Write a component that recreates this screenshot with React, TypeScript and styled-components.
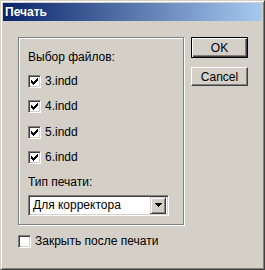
import React from "react";
import styled, { createGlobalStyle } from "styled-components";

const GlobalStyle = createGlobalStyle`
  html, body {
    margin: 0;
    padding: 0;
    background: #d4d0c8;
  }
`;

const Window = styled.div`
  width: 265px;
  height: 270px;
  box-sizing: border-box;
  border: 1px solid;
  border-color: #d4d0c8 #404040 #404040 #d4d0c8;
  box-shadow: inset 1px 1px #ffffff, inset -1px -1px #808080;
  padding: 2px;
  background: #d4d0c8;
  display: flex;
  flex-direction: column;
  font-family: "Liberation Sans", Arial, sans-serif;
  font-size: 12px;
  color: #000;
`;

const TitleBar = styled.div`
  height: 18px;
  line-height: 18px;
  padding-left: 2px;
  background: linear-gradient(90deg, #0a246a, #a6caf0);
  color: #fff;
  font-weight: bold;
`;

const Body = styled.div`
  display: flex;
  padding: 16px 0 0 15px;
`;

const LeftColumn = styled.div`
  display: flex;
  flex-direction: column;
`;

const GroupBox = styled.div`
  width: 166px;
  height: 188px;
  box-sizing: border-box;
  border: 1px solid #808080;
  box-shadow: inset 1px 1px #ffffff, 1px 1px #ffffff;
  padding: 12px 0 0 9px;
  display: flex;
  flex-direction: column;
`;

const Caption = styled.div<{ $gap?: number }>`
  line-height: 14px;
  height: 14px;
  margin-top: ${(p) => p.$gap ?? 0}px;
  white-space: nowrap;
`;

const CheckList = styled.div`
  display: flex;
  flex-direction: column;
  gap: 11.34px;
  margin-top: 10px;
`;

const CheckRow = styled.label<{ $gap?: number }>`
  display: flex;
  align-items: flex-start;
  height: 14px;
  line-height: 14px;
  margin-top: ${(p) => p.$gap ?? 0}px;
  white-space: nowrap;
`;

const Box = styled.span`
  width: 13px;
  height: 13px;
  margin-top: 1px;
  box-sizing: border-box;
  border: 1px solid;
  border-color: #808080 #ffffff #ffffff #808080;
  box-shadow: inset 1px 1px #404040, inset -1px -1px #d4d0c8;
  background: #fff;
  display: flex;
  align-items: center;
  justify-content: center;
  flex: none;
`;

const CheckText = styled.span`
  margin-left: 4px;
`;

const Select = styled.div`
  margin-top: 6px;
  width: 141px;
  height: 21px;
  box-sizing: border-box;
  border: 1px solid;
  border-color: #808080 #ffffff #ffffff #808080;
  box-shadow: inset 1px 1px #404040, inset -1px -1px #d4d0c8;
  background: #fff;
  padding: 2px;
  display: flex;
  align-items: center;
`;

const SelectText = styled.span`
  flex: 1;
  padding-left: 2px;
  line-height: 17px;
  white-space: nowrap;
`;

const DropButton = styled.span`
  width: 16px;
  height: 17px;
  box-sizing: border-box;
  border: 1px solid;
  border-color: #d4d0c8 #404040 #404040 #d4d0c8;
  box-shadow: inset 1px 1px #ffffff, inset -1px -1px #808080;
  background: #d4d0c8;
  display: flex;
  align-items: center;
  justify-content: center;
`;

const ButtonColumn = styled.div`
  display: flex;
  flex-direction: column;
  margin-left: 7px;
  gap: 9px;
`;

const Button = styled.div<{ $default?: boolean }>`
  width: 57px;
  height: ${(p) => (p.$default ? 21 : 19)}px;
  box-sizing: border-box;
  background: #d4d0c8;
  display: flex;
  align-items: center;
  justify-content: center;
  border: 1px solid;
  border-color: ${(p) => (p.$default ? "#000" : "#fff #404040 #404040 #fff")};
  box-shadow: ${(p) =>
    p.$default
      ? "inset 1px 1px #ffffff, inset -1px -1px #404040, inset -2px -2px #808080"
      : "inset -1px -1px #808080"};
`;

const Check = () => (
  <svg width="7" height="7" viewBox="0 0 7 7" shapeRendering="crispEdges">
    <path
      d="M0 2h1v3h-1z M1 3h1v3h-1z M2 4h1v3h-1z M3 3h1v3h-1z M4 2h1v3h-1z M5 1h1v3h-1z M6 0h1v3h-1z"
      fill="#000"
    />
  </svg>
);

const Arrow = () => (
  <svg width="7" height="4" viewBox="0 0 7 4" shapeRendering="crispEdges">
    <path d="M0 0h7v1h-1v1h-1v1h-1v1h-1v-1h-1v-1h-1v-1h-1z" fill="#000" />
  </svg>
);

const files = ["3.indd", "4.indd", "5.indd", "6.indd"];

export default function App() {
  return (
    <>
      <GlobalStyle />
      <Window>
        <TitleBar>Печать</TitleBar>
        <Body>
          <LeftColumn>
            <GroupBox>
              <Caption>Выбор файлов:</Caption>
              <CheckList>
                {files.map((f) => (
                  <CheckRow key={f}>
                    <Box>
                      <Check />
                    </Box>
                    <CheckText>{f}</CheckText>
                  </CheckRow>
                ))}
              </CheckList>
              <Caption $gap={11}>Тип печати:</Caption>
              <Select>
                <SelectText>Для корректора</SelectText>
                <DropButton>
                  <Arrow />
                </DropButton>
              </Select>
            </GroupBox>
            <CheckRow $gap={9}>
              <Box />
              <CheckText>Закрыть после печати</CheckText>
            </CheckRow>
          </LeftColumn>
          <ButtonColumn>
            <Button $default>OK</Button>
            <Button>Cancel</Button>
          </ButtonColumn>
        </Body>
      </Window>
    </>
  );
}
